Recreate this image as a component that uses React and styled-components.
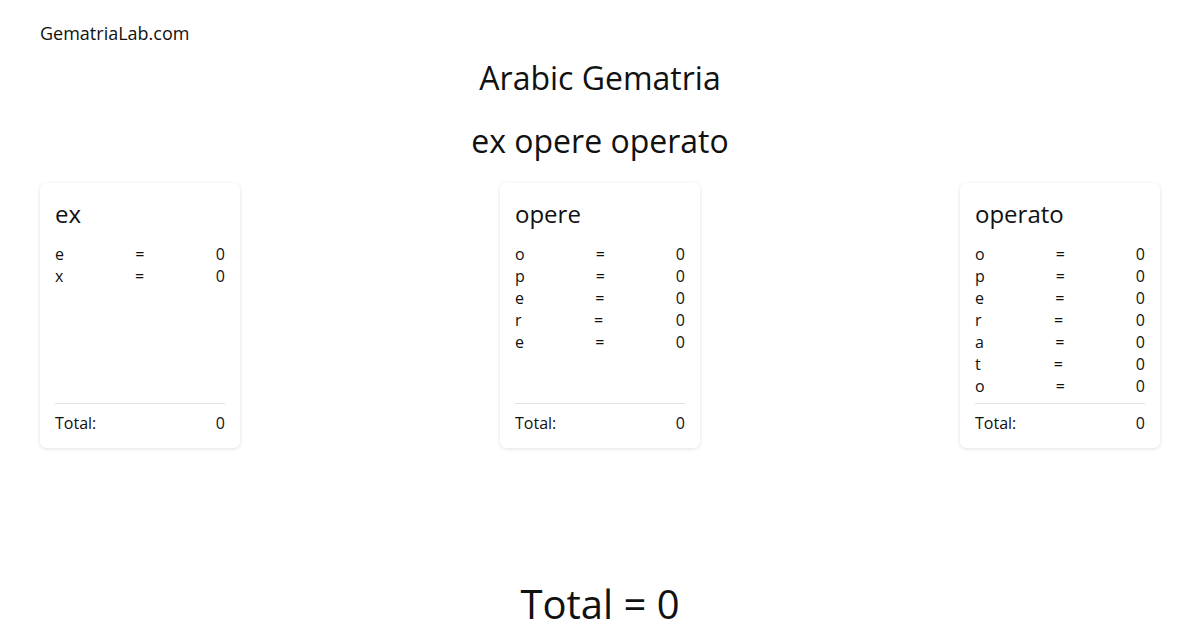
import React from 'react';
import styled, { createGlobalStyle } from 'styled-components';

const words = ['ex', 'opere', 'operato'];

const Global = createGlobalStyle`
  body {
    margin: 0;
    background: #ffffff;
    font-family: "Open Sans", "Noto Sans", sans-serif;
    color: #111111;
  }
`;

const App = () => {
  return (
    <>
      <Global />
      <Page>
        <Brand>GematriaLab.com</Brand>
        <Title>Arabic Gematria</Title>
        <Phrase>{words.join(' ')}</Phrase>
        <Cards>
          {words.map((word, i) => (
            <Card key={i}>
              <CardTitle>{word}</CardTitle>
              <Letters>
                {word.split('').map((ch, j) => (
                  <Row key={j}>
                    <span>{ch}</span>
                    <span>=</span>
                    <span>0</span>
                  </Row>
                ))}
              </Letters>
              <CardTotal>
                <span>Total:</span>
                <span>0</span>
              </CardTotal>
            </Card>
          ))}
        </Cards>
        <GrandTotal>Total = 0</GrandTotal>
      </Page>
    </>
  );
};

const Page = styled.div`
  padding: 21px 40px 0;
  display: flex;
  flex-direction: column;
`;
const Brand = styled.div`
  font-size: 18px;
  line-height: 24px;
`;
const Title = styled.h1`
  margin: 11px 0 0;
  text-align: center;
  font-size: 32px;
  font-weight: 400;
  line-height: 44px;
`;
const Phrase = styled(Title)`
  margin-top: 19px;
`;
const Cards = styled.div`
  display: flex;
  justify-content: space-between;
  align-items: stretch;
  margin-top: 20px;
`;
const Card = styled.div`
  width: 200px;
  box-sizing: border-box;
  padding: 15px 15px 14px;
  border-radius: 7px;
  background: #fff;
  box-shadow: 0 1px 4px rgba(0, 0, 0, 0.12);
  display: flex;
  flex-direction: column;
`;
const CardTitle = styled.div`
  font-size: 24px;
  line-height: 32px;
`;
const Letters = styled.div`
  flex: 1;
  margin-top: 13px;
  margin-bottom: 6px;
`;
const Row = styled.div`
  display: flex;
  justify-content: space-between;
  font-size: 16px;
  line-height: 22px;
`;
const CardTotal = styled(Row)`
  border-top: 1px solid #e2e2e2;
  padding-top: 8px;
`;
const GrandTotal = styled.div`
  margin-top: 131px;
  text-align: center;
  font-size: 40px;
  line-height: 50px;
`;

export default App;
